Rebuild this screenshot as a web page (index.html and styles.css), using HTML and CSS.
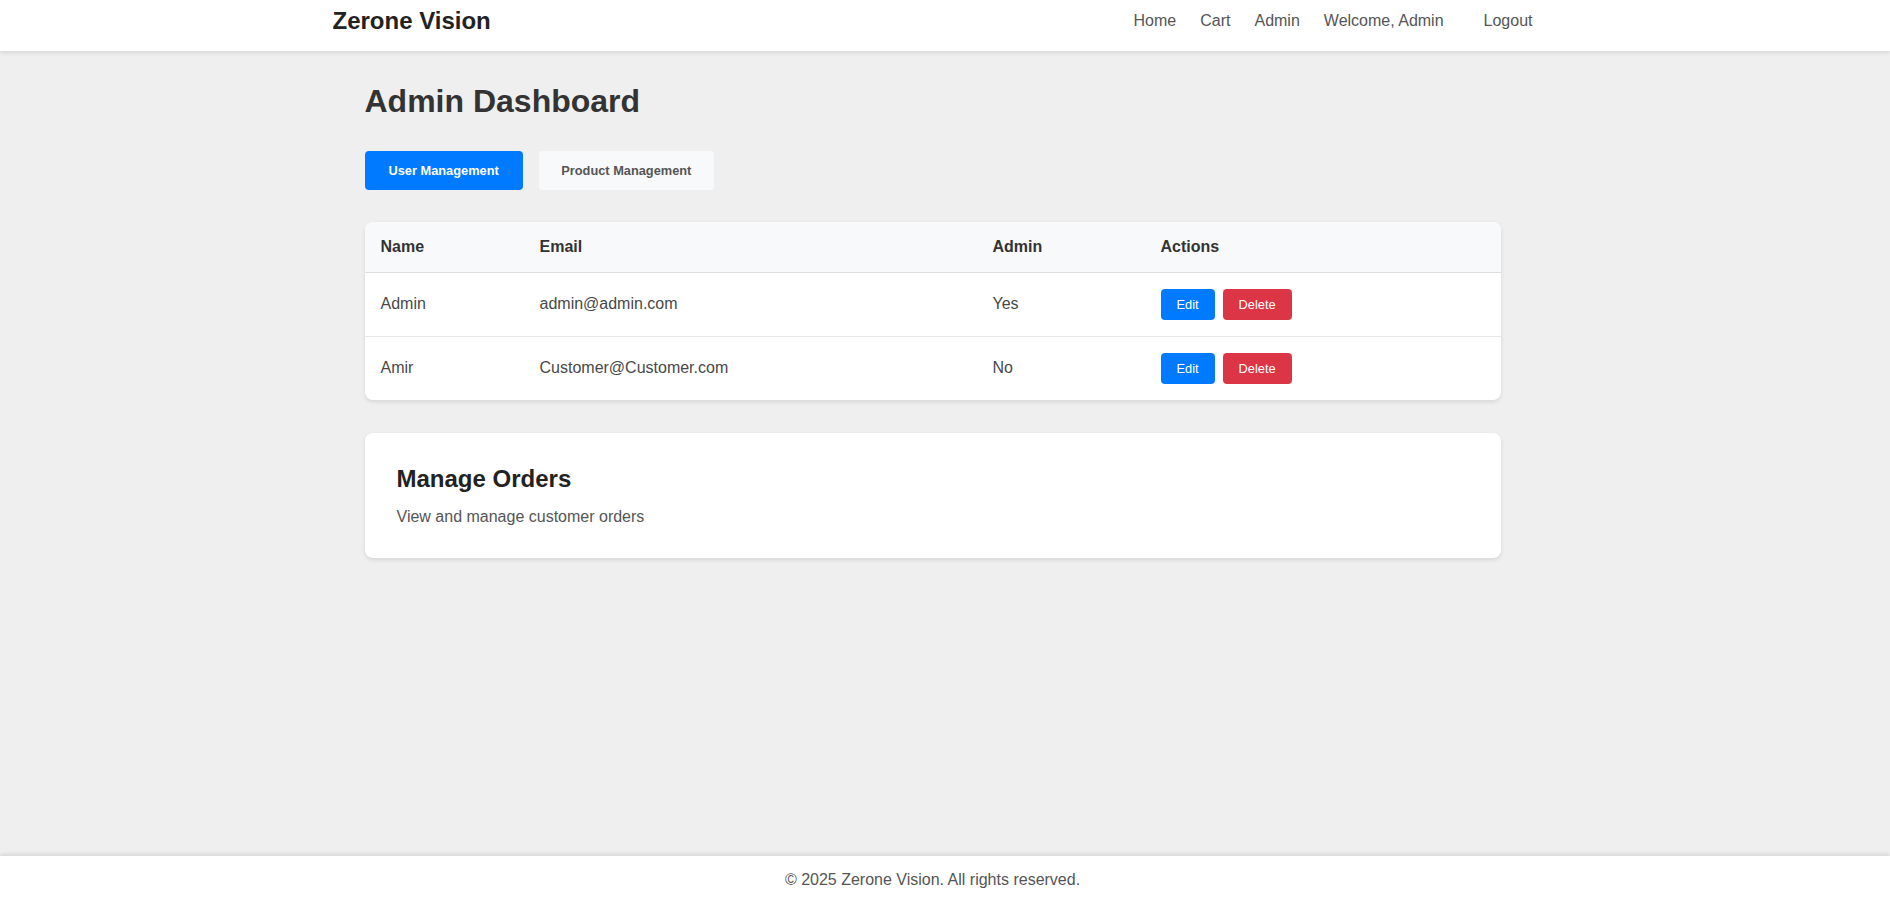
FILE: index.html
```html
<!DOCTYPE html>
<html lang="en">
<head>
<meta charset="utf-8">
<title>Admin Dashboard - Zerone Vision</title>
<link rel="stylesheet" href="styles.css">
</head>
<body>
  <header class="site-header">
    <div class="container header-inner">
      <a class="logo" href="#">Zerone Vision</a>
      <nav class="nav">
        <a class="nav-link" href="#">Home</a>
        <a class="nav-link" href="#">Cart</a>
        <a class="nav-link" href="#">Admin</a>
        <span class="nav-welcome">Welcome, Admin</span>
        <button class="nav-logout" type="button">Logout</button>
      </nav>
    </div>
  </header>

  <main class="main">
    <div class="container content">
      <h1 class="page-title">Admin Dashboard</h1>

      <div class="tabs">
        <button class="tab tab-active" type="button">User Management</button>
        <button class="tab" type="button">Product Management</button>
      </div>

      <div class="card table-card">
        <table class="users-table">
          <colgroup>
            <col class="col-name">
            <col class="col-email">
            <col class="col-admin">
            <col class="col-actions">
          </colgroup>
          <thead>
            <tr>
              <th>Name</th>
              <th>Email</th>
              <th>Admin</th>
              <th>Actions</th>
            </tr>
          </thead>
          <tbody>
            <tr>
              <td>Admin</td>
              <td>admin@admin.com</td>
              <td>Yes</td>
              <td><button class="btn btn-edit" type="button">Edit</button><button class="btn btn-delete" type="button">Delete</button></td>
            </tr>
            <tr>
              <td>Amir</td>
              <td>Customer@Customer.com</td>
              <td>No</td>
              <td><button class="btn btn-edit" type="button">Edit</button><button class="btn btn-delete" type="button">Delete</button></td>
            </tr>
          </tbody>
        </table>
      </div>

      <section class="card orders-card">
        <h2 class="orders-title">Manage Orders</h2>
        <p class="orders-text">View and manage customer orders</p>
      </section>
    </div>
  </main>

  <footer class="site-footer">
    <div class="container footer-inner">
      <p class="footer-text">&copy; 2025 Zerone Vision. All rights reserved.</p>
    </div>
  </footer>
</body>
</html>
```

FILE: styles.css
```css
* {
  box-sizing: border-box;
}

html, body {
  margin: 0;
  padding: 0;
}

body {
  font-family: "Liberation Sans", Arial, sans-serif;
  font-size: 16px;
  color: #333;
  background: #efefef;
  min-height: 100vh;
  display: flex;
  flex-direction: column;
}

.container {
  width: 1200px;
  margin-left: calc(50% - 612.5px);
}

/* Header */
.site-header {
  background: #fff;
  box-shadow: 0 2px 4px rgba(0, 0, 0, 0.1);
  padding: 7px 0 15.5px;
  position: relative;
  z-index: 2;
}

.header-inner {
  display: flex;
  align-items: center;
  justify-content: space-between;
  height: 28px;
}

.logo {
  font-size: 24px;
  font-weight: bold;
  color: #222;
  text-decoration: none;
  line-height: 28px;
}

.nav {
  display: flex;
  align-items: center;
  gap: 24px;
}

.nav-link,
.nav-welcome {
  color: #555;
  text-decoration: none;
  font-size: 16px;
}

.nav-logout {
  font-family: inherit;
  font-size: 16px;
  color: #555;
  background: none;
  border: none;
  padding: 0;
  margin-left: 16px;
  cursor: pointer;
}

/* Main */
.main {
  flex: 1;
}

.content {
  padding: 32px 32px 32px;
}

.page-title {
  font-size: 32px;
  font-weight: bold;
  color: #333;
  margin: 0 0 31px;
}

.tabs {
  display: flex;
  gap: 16px;
  margin-bottom: 32px;
}

.tab {
  font-family: inherit;
  font-size: 12.8px;
  font-weight: bold;
  padding: 12px 24px;
  border: none;
  border-radius: 4px;
  background: #f8f9fa;
  color: #555;
  cursor: pointer;
}

.tab + .tab {
  padding: 12px 22.5px;
}

.tab-active {
  background: #007bff;
  color: #fff;
}

.card {
  background: #fff;
  border-radius: 8px;
  box-shadow: 0 2px 4px rgba(0, 0, 0, 0.1);
}

.table-card {
  overflow: hidden;
  margin-bottom: 33px;
}

.users-table {
  width: 100%;
  border-collapse: collapse;
  table-layout: fixed;
}

.col-name { width: 159px; }
.col-email { width: 453px; }
.col-admin { width: 168px; }

.users-table th,
.users-table td {
  text-align: left;
  padding: 16px;
  vertical-align: middle;
}

.users-table th {
  background: #f8f9fa;
  font-weight: bold;
  color: #333;
  border-bottom: 1px solid #dcdee1;
}

.users-table td {
  color: #484848;
  border-bottom: 1px solid #e6e7e9;
}

.users-table tbody tr:last-child td {
  border-bottom: none;
}

.btn {
  font-family: inherit;
  font-size: 12.8px;
  padding: 8px 16px;
  border: none;
  border-radius: 4px;
  color: #fff;
  cursor: pointer;
  vertical-align: middle;
}

.btn-edit {
  background: #007bff;
  margin-right: 8px;
}

.btn-delete {
  background: #dc3545;
}

.orders-card {
  padding: 32px;
}

.orders-title {
  font-size: 24px;
  font-weight: bold;
  color: #222;
  margin: 0 0 15px;
}

.orders-text {
  margin: 0;
  color: #555;
}

/* Footer */
.site-footer {
  background: #fff;
  box-shadow: 0 -2px 4px rgba(0, 0, 0, 0.1);
  padding: 15px 0 31px;
}

.footer-text {
  margin: 0;
  text-align: center;
  color: #555;
}
```
